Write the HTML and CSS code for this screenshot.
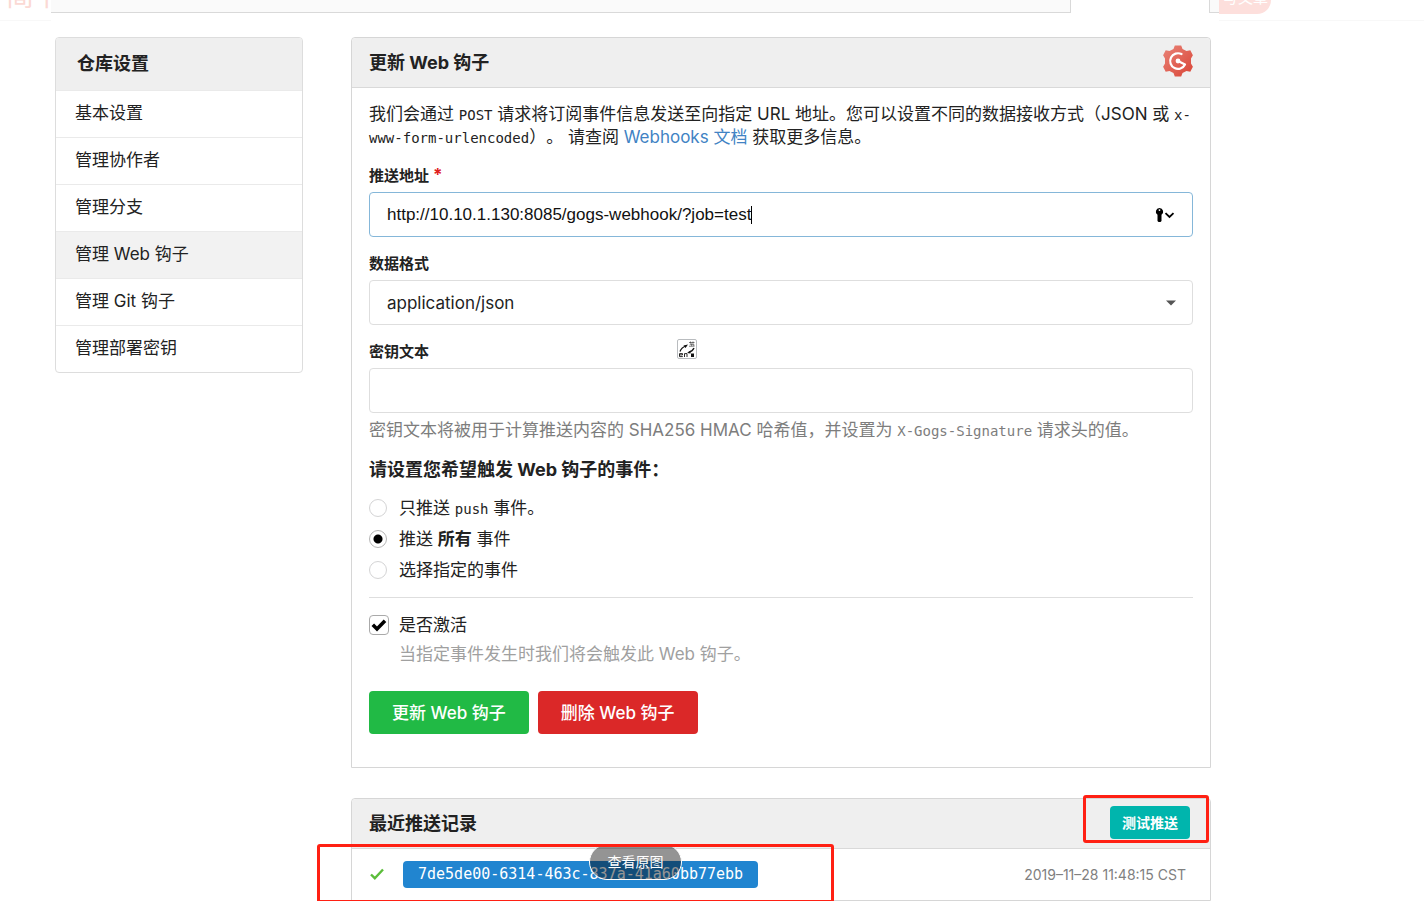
FILE: index.html
```html
<!DOCTYPE html>
<html lang="zh-CN">
<head>
<meta charset="utf-8">
<title>更新 Web 钩子</title>
<link rel="stylesheet" href="styles.css">
</head>
<body>
<header class="topbar">
  <div class="brand"><span class="brand-name">简书</span></div>
  <div class="tabs"><div class="tab-strip"></div><div class="tab-end"></div></div>
  <div class="top-actions"><a class="write" href="#">写文章</a></div>
</header>
<div class="page">
  <nav class="sidebar">
    <h2 class="side-title">仓库设置</h2>
    <a class="side-item" href="#">基本设置</a>
    <a class="side-item" href="#">管理协作者</a>
    <a class="side-item" href="#">管理分支</a>
    <a class="side-item active" href="#">管理 Web 钩子</a>
    <a class="side-item" href="#">管理 Git 钩子</a>
    <a class="side-item" href="#">管理部署密钥</a>
  </nav>
  <main class="main">
    <section class="card">
      <div class="card-head">
        <h1 class="title">更新 Web 钩子</h1>
        <svg class="gogs" viewBox="0 0 30 32" aria-hidden="true">
          <defs><linearGradient id="red" x1="0" y1="0" x2="1" y2="1"><stop offset="0" stop-color="#e98478"/><stop offset="1" stop-color="#d94436"/></linearGradient></defs>
          <path fill="url(#red)" d="M11.800 .5h6.400l1.300 3.500 4 2L27.300 5.300l2.600 4.900-1.900 3.300v5l1.900 3.300-2.600 4.900-3.800-.7-4 2-1.300 3.500h-6.400l-1.300-3.500-4-2-3.800.7L.1 21.800 2 18.500v-5L.1 10.200l2.600-4.900 3.800.7 4-2z"/>
          <path fill="none" stroke="#fff" stroke-width="2.200" stroke-linecap="round" stroke-linejoin="round" d="M18.500 9.100A7.800 7.800 0 1 0 22 19.500L15 16"/>
          <circle cx="15" cy="16" r="2.400" fill="#fff"/>
        </svg>
      </div>
      <form class="card-body">
        <p class="intro">我们会通过 <code>POST</code> 请求将订阅事件信息发送至向指定 URL 地址。您可以设置不同的数据接收方式（JSON 或 <code>x-<br>www-form-urlencoded</code>）。 请查阅 <a class="link" href="#">Webhooks 文档</a> 获取更多信息。</p>
        <label class="label" for="url">推送地址<span class="req">*</span></label>
        <div class="field focused">
          <input class="url" id="url" type="text" value="http://10.10.1.130:8085/gogs-webhook/?job=test"><span class="caret"></span>
          <svg class="key" viewBox="0 0 20 16" aria-hidden="true"><path fill="#000" fill-rule="evenodd" d="M4.500 1a3.700 3.700 0 0 1 2 6.800V14l-1 1h-2l-1-1V7.800A3.700 3.700 0 0 1 4.500 1zm0 1.200a.9.9 0 1 0 0 1.800.9.9 0 0 0 0-1.800z"/><path fill="none" stroke="#000" stroke-width="1.800" d="M10.500 6.200l4 3.800 4-3.800"/></svg>
        </div>
        <label class="label" for="type">数据格式</label>
        <div class="field">
          <select class="select" id="type"><option>application/json</option></select>
          <svg class="arrow" viewBox="0 0 10 6" aria-hidden="true"><path fill="#555" d="M0 .5h10L5 5.500z"/></svg>
        </div>
        <label class="label" for="secret">密钥文本</label>
        <div class="field">
          <input class="secret" id="secret" type="text">
          <svg class="translate" viewBox="0 0 20 20" aria-hidden="true">
            <rect x=".5" y=".5" width="19" height="19" rx="1.500" fill="#fff" stroke="#b9bcbf"/>
            <path fill="none" stroke="#111" stroke-width="1.300" d="M3 12.500C4 9.500 6 8 9 7M17 9c-1 2.500-2.500 3.500-5.500 4.500"/>
            <path fill="#111" d="M6.500 6.500L11 5.500 8.500 9zM13.500 11.500l-3.500 2.500 3.500.5z"/>
            <path fill="none" stroke="#444" stroke-width=".7" d="M12 3.500h5.500M13.500 2.500v2M16 2.500v2M12.800 5.300h4v1.700M12 7.200h5.500M14.700 4.500v2.700"/>
            <path fill="none" stroke="#111" stroke-width=".9" d="M2.500 15.900h3v-1.300h-3v3h3.300M7.500 18v-3.400H10V18"/>
            <path fill="#111" d="M14 14.500h3V18h-3z"/>
          </svg>
        </div>
        <p class="help">密钥文本将被用于计算推送内容的 SHA256 HMAC 哈希值，并设置为 <code>X-Gogs-Signature</code> 请求头的值。</p>
        <h2 class="events">请设置您希望触发 Web 钩子的事件：</h2>
        <div class="radios">
          <label class="choice"><input class="radio" type="radio" name="events"><span>只推送 <code>push</code> 事件。</span></label>
          <label class="choice"><input class="radio" type="radio" name="events" checked><span>推送 <strong>所有</strong> 事件</span></label>
          <label class="choice"><input class="radio" type="radio" name="events"><span>选择指定的事件</span></label>
        </div>
        <hr class="rule">
        <label class="choice">
          <span class="tick"><input class="check" type="checkbox" checked><svg class="mark" viewBox="0 0 16 14" aria-hidden="true"><path fill="none" stroke="#000" stroke-width="3.600" d="M1.800 6.800l4.200 4.200 8-8.200"/></svg></span>
          <span>是否激活</span>
        </label>
        <p class="note">当指定事件发生时我们将会触发此 Web 钩子。</p>
        <div class="buttons">
          <button class="btn green" type="button">更新 Web 钩子</button>
          <button class="btn red" type="button">删除 Web 钩子</button>
        </div>
      </form>
    </section>
    <section class="card history">
      <div class="card-head">
        <h2 class="title">最近推送记录</h2>
        <button class="test" type="button">测试推送</button>
        <span class="frame frame-test"></span>
      </div>
      <div class="record">
        <svg class="ok" viewBox="0 0 14 12" aria-hidden="true"><path fill="none" stroke="#5bbd3a" stroke-width="2.400" d="M1 6.500l3.800 3.700L13 1.500"/></svg>
        <a class="hash" href="#">7de5de00-6314-463c-837a-41a60bb77ebb</a>
        <time class="time">2019–11–28 11:48:15 CST</time>
        <button class="original" type="button">查看原图</button>
        <span class="frame frame-record"></span>
      </div>
    </section>
  </main>
</div>
</body>
</html>
```
FILE: styles.css
```css
* { box-sizing: border-box; }
body {
  margin: 0;
  background: #fff;
  color: #222;
  font: 17px/24px Inter, "Noto Sans CJK SC", sans-serif;
  text-spacing-trim: space-all;
}
h1, h2, p { margin: 0; }
a { color: inherit; text-decoration: none; }
button, input, select { font: inherit; color: inherit; }
code { font: 14px "DejaVu Sans Mono", monospace; }

.topbar { display: flex; height: 21px; overflow: hidden; }
.brand {
  display: flex;
  align-items: flex-end;
  width: 51px;
  overflow: hidden;
  padding: 0 0 8px 6px;
  border-bottom: 1px solid #f8f8f8;
}
.brand-name { flex: none; color: #fbd9d4; font-size: 28px; line-height: 32px; }
.tabs { display: flex; flex: 1; justify-content: space-between; height: 13px; }
.tab-strip {
  width: 1020px;
  border: solid #d9d9d9;
  border-width: 0 1px 1px 0;
  background: #fafafa;
}
.tab-end { width: 10px; border: solid #d9d9d9; border-width: 0 0 1px 1px; background: #fafafa; }
.top-actions { width: 205px; border-bottom: 1px solid #f8f8f8; }
.write {
  display: flex;
  align-items: flex-end;
  width: 52px;
  height: 14px;
  overflow: hidden;
  padding: 0 0 8px 4px;
  border-radius: 0 0 18px 0;
  background: #fddfdc;
  color: #fff;
  font-size: 15px;
  line-height: 16px;
  white-space: nowrap;
}

.page {
  display: grid;
  grid-template-columns: 248px 1fr;
  align-items: start;
  gap: 48px;
  padding: 16px 213px 0 55px;
}
.sidebar { overflow: hidden; border: 1px solid #ddd; border-radius: 4px; }
.side-title { padding: 14px 21px; background: #efefef; font-size: 18px; line-height: 24px; }
.side-item {
  display: block;
  padding: 10px 19px 12px;
  border-top: 1px solid #eaeaea;
}
.side-item.active { background: #f2f2f2; }

.main { min-width: 0; }
.card { border: 1px solid #d6d6d6; border-radius: 4px 4px 0 0; }
.card-head {
  position: relative;
  display: flex;
  align-items: center;
  justify-content: space-between;
  height: 50px;
  padding: 0 17px;
  border-bottom: 1px solid #d9d9d9;
  border-radius: 4px 4px 0 0;
  background: #efefef;
}
.title { font-size: 18px; line-height: 24px; }
.gogs { width: 30px; height: 32px; margin-bottom: 4px; }
.card-body { padding: 15px 17px 33px; }
.intro { margin-bottom: 16px; line-height: 23px; }
.link { color: #4183c4; }
.label { display: block; margin-bottom: 6px; font-size: 15px; font-weight: 700; line-height: 20px; }
.req { margin-left: 4px; color: #e02020; font-size: 17px; }
.field {
  position: relative;
  display: flex;
  align-items: center;
  height: 45px;
  margin-bottom: 17px;
  border: 1px solid #dedede;
  border-radius: 4px;
}
.field.focused { border-color: #85b7d9; padding: 0 17px; }
.url {
  field-sizing: content;
  padding: 0;
  border: 0;
  outline: 0;
  color: #111;
  font: 17px/24px "Liberation Sans", Arial, sans-serif;
}
.caret { width: 1px; height: 18px; background: #000; }
.key { width: 20px; height: 16px; margin-left: auto; }
.select, .secret {
  width: 100%;
  height: 100%;
  padding: 0 17px;
  border: 0;
  outline: 0;
  background: transparent;
  appearance: none;
}
.arrow { position: absolute; right: 16px; width: 10px; height: 6px; }
.translate { position: absolute; left: 307px; bottom: 53px; width: 20px; height: 20px; }
.help { margin: -11px 0 16px; color: #7d7d7d; line-height: 23px; }
.events { margin-bottom: 14px; font-size: 18px; line-height: 24px; }
.radios { display: grid; gap: 7px; }
.choice { display: flex; align-items: center; }
.radio {
  width: 18px;
  height: 18px;
  margin: 0 12px 0 0;
  border: 1px solid #d4d4d5;
  border-radius: 50%;
  background: #fff;
  appearance: none;
}
.radio:checked { border-color: #b5b5b5; background: radial-gradient(circle, #000 4px, #fff 5px); }
.rule { margin: 15px 0; border: 0; border-top: 1px solid #dedede; }
.tick { position: relative; display: flex; margin-right: 10px; }
.check {
  width: 20px;
  height: 20px;
  margin: 0;
  border: 1px solid #aaa;
  border-radius: 4px;
  background: #fff;
  appearance: none;
}
.mark { position: absolute; top: 3px; left: 2px; width: 16px; height: 14px; }
.note { margin: 6px 0 25px; padding-left: 30px; color: #a0a0a0; line-height: 23px; }
.buttons { display: flex; gap: 9px; }
.btn {
  height: 43px;
  padding: 0 23px;
  border: 0;
  border-radius: 4px;
  color: #fff;
  font-weight: 500;
}
.green { background: #21ba45; }
.red { background: #db2828; }

.history { margin-top: 30px; }
.test {
  height: 33px;
  margin: 0 3px 2px 0;
  padding: 0 12px;
  border: 0;
  border-radius: 4px;
  background: #00b5ad;
  color: #fff;
  font-size: 14px;
  font-weight: 700;
}
.record { position: relative; display: flex; align-items: center; height: 51px; padding: 0 24px 0 18px; }
.ok { width: 14px; height: 12px; margin-bottom: 2px; }
.hash {
  margin-left: 19px;
  padding: 2px 15px;
  border-radius: 4px;
  background: #2185d0;
  color: #fff;
  font: 15px/23px "DejaVu Sans Mono", monospace;
}
.time { margin-left: auto; color: #808080; font-size: 14px; }
.frame { position: absolute; border: 3px solid #ff2013; border-radius: 3px; pointer-events: none; }
.frame-test { top: -4px; right: 1px; width: 126px; height: 48px; }
.frame-record { top: -5px; left: -35px; width: 517px; height: 59px; }
.original {
  position: absolute;
  top: -5px;
  left: 237px;
  width: 93px;
  height: 36px;
  padding: 0;
  border: 1px solid #fff;
  border-radius: 18px;
  background: rgba(0, 0, 0, .42);
  color: #fff;
  font-size: 14px;
}
```
